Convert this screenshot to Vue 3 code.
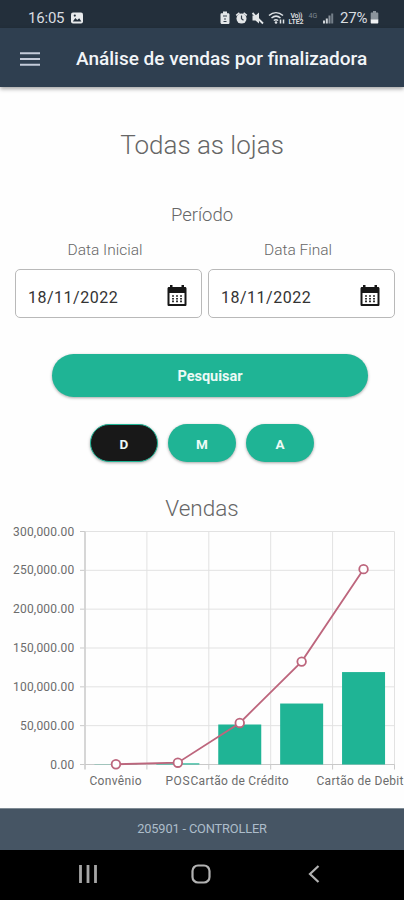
<template>
  <div class="screen">
    <div class="status-bar">
      <div class="status-left">
        <span class="clock">16:05</span>
        <svg class="picture-icon" width="12" height="12" viewBox="0 0 12 12">
          <rect x="0" y="0.5" width="12" height="11" rx="2" fill="#e8eaec" />
          <path d="M1.8 9.4 4.4 6l1.8 2 2-1.8 2.2 3.2z" fill="#232f3b" />
          <circle cx="3.8" cy="3.6" r="1.1" fill="#232f3b" />
        </svg>
      </div>
      <div class="status-right">
        <svg class="status-icons" width="114" height="16" viewBox="0 0 114 16">
          <g fill="#e3e6e8">
            <path d="M3 1.5h4v1.7h1.2c.9 0 1.3.6 1.3 1.3v8c0 1-.6 1.5-1.5 1.5H2c-.9 0-1.5-.6-1.5-1.5v-8c0-.8.5-1.3 1.3-1.3H3z" />
            <circle cx="21.5" cy="8.6" r="5" />
            <path d="m15.7 4.8 3.2-2.6 1 1.2-3.2 2.6zM27.3 4.8l-3.2-2.6-1 1.2 3.2 2.6z" />
            <path d="M32.500 5.500H35.500L39 2.500v11L35.500 10.500H32.500z" />
          </g>
          <path d="M3 6h4M3.5 11.5h3M5 8v2" stroke="#34404b" fill="none" />
          <path d="M21.5 5.5v3.3l2 1.5" stroke="#34404b" stroke-width="1.2" fill="none" />
          <path d="m32.5 3 10.5 10.5" stroke="#e3e6e8" stroke-width="1.9" />
          <g fill="none" stroke="#dfe3e6" stroke-width="1.5">
            <path d="M49 5.5c4.2-3.7 9.7-3.7 14 0M51.5 8c2.8-2.3 6.3-2.3 9 0M53.8 10.5c1.3-1 3-1 4.4 0" />
            <path d="M60.5 9.5v4M63.5 9.5v4" />
          </g>
          <circle cx="56" cy="12.5" r="1.3" fill="#dfe3e6" />
          <text x="70.5" y="7.5" class="volte" textLength="12">Vo))</text>
          <text x="68.5" y="14" class="volte" textLength="15">LTE2</text>
          <text x="88.5" y="7.5" class="network">4G</text>
          <g>
            <rect x="103" y="10.5" width="2" height="3" fill="#cfd4d8" />
            <rect x="105.8" y="8.5" width="2" height="5" fill="#cfd4d8" />
            <rect x="108.5" y="5.5" width="2" height="8" fill="#8b949d" />
            <rect x="111.2" y="3.5" width="2" height="10" fill="#737e88" />
          </g>
        </svg>
        <span class="battery-text">27%</span>
        <svg width="9" height="13" viewBox="0 0 9 13">
          <path d="M3 0h3v1.5h1.3c.7 0 1 .4 1 1V9H.7V2.5c0-.6.3-1 1-1H3z" fill="#8b949c" />
          <path d="M.7 8.5h7.6v3c0 .7-.4 1-1 1H1.7c-.6 0-1-.3-1-1z" fill="#f0f1f2" />
        </svg>
      </div>
    </div>

    <header class="toolbar">
      <svg class="menu-icon" width="20" height="14" viewBox="0 0 20 14">
        <path d="M0 1.2h20M0 7h20M0 12.8h20" stroke="#c4cbd9" stroke-width="2.1" />
      </svg>
      <h1 class="toolbar-title">Análise de vendas por finalizadora</h1>
    </header>

    <main class="content">
      <h2 class="store-title">Todas as lojas</h2>
      <h3 class="period-title">Período</h3>

      <div class="dates">
        <div v-for="field in dateFields" :key="field.label" class="date-field">
          <label class="date-label">{{ field.label }}</label>
          <div class="date-input">
            <span class="date-value">{{ field.value }}</span>
            <svg width="20" height="22" viewBox="0 0 20 22">
              <path d="M3 0h2.5v2h9V0H17v2h1c1 0 1.500.6 1.500 1.500v16c0 1-.5 1.500-1.500 1.500H2c-1 0-1.500-.5-1.500-1.500v-16C.5 2.600 1 2 2 2h1z" fill="#171717" />
              <path d="M2.5 8h15v11h-15z" fill="#fff" />
              <path d="M5 11h10.500M5 13.700h10.500M5 16.400h10.500" stroke="#333" stroke-width="1.6" stroke-dasharray="2 2" />
            </svg>
          </div>
        </div>
      </div>

      <button class="search-button">Pesquisar</button>

      <div class="ranges">
        <button
          v-for="range in ranges"
          :key="range"
          class="range-button"
          :class="{ active: range === activeRange }"
          @click="activeRange = range"
        >{{ range }}</button>
      </div>

      <h3 class="chart-title">Vendas</h3>
      <svg class="chart" width="404" height="272" viewBox="0 0 404 272">
        <g v-for="tick in yTicks" :key="tick.value">
          <line :x1="left" :x2="right" :y1="tick.y" :y2="tick.y" class="grid-line" />
          <line :x1="left - 5" :x2="left" :y1="tick.y" :y2="tick.y" class="axis-line" />
          <text x="74.5" :y="tick.y + 4" class="y-label">{{ tick.text }}</text>
        </g>
        <g v-for="n in 5" :key="n">
          <line :x1="left + n * step" :x2="left + n * step" :y1="top" :y2="bottom" class="grid-line" />
          <line :x1="left + n * step" :x2="left + n * step" :y1="bottom" :y2="bottom + 5" class="axis-line" />
        </g>
        <line :x1="left" :x2="left" :y1="top" :y2="bottom + 5" class="y-axis" />
        <line :x1="left" :x2="right" :y1="bottom" :y2="bottom" class="axis-line" />
        <rect
          v-for="(bar, i) in bars"
          :key="i"
          :x="center(i) - 21.5"
          :y="yPos(bar)"
          width="43"
          :height="bottom - yPos(bar)"
          fill="#1fb495"
        />
        <polyline :points="linePoints" class="total-line" />
        <circle v-for="(total, i) in totals" :key="i" :cx="center(i)" :cy="yPos(total)" r="4.3" class="total-point" />
        <text v-for="label in xLabels" :key="label.text" :x="label.x" y="262.5" :textLength="label.width" class="x-label">{{ label.text }}</text>
      </svg>
    </main>

    <footer class="footer">205901 - CONTROLLER</footer>

    <nav class="nav-bar">
      <svg width="18" height="18" viewBox="0 0 18 18">
        <path d="M1.5 0v18M9 0v18M16.5 0v18" stroke="#a6a6a6" stroke-width="2.8" />
      </svg>
      <svg class="home-icon" width="20" height="20" viewBox="0 0 20 20">
        <rect x="1.5" y="1.5" width="17" height="17" rx="5.5" fill="none" stroke="#b2b2b2" stroke-width="2.2" />
      </svg>
      <svg width="12" height="18" viewBox="0 0 12 18">
        <path d="M10.5 1 2 9l8.5 8" fill="none" stroke="#b2b2b2" stroke-width="2.2" />
      </svg>
    </nav>
  </div>
</template>

<script setup>
import { ref, computed } from 'vue'

const dateFields = [
  { label: 'Data Inicial', value: '18/11/2022' },
  { label: 'Data Final', value: '18/11/2022' }
]

const ranges = ['D', 'M', 'A']
const activeRange = ref('D')

const bars = [300, 1500, 51500, 78500, 119000]
const totals = [300, 2300, 53500, 132500, 251500]
const xLabels = [
  { text: 'Convênio', x: 89.5, width: 52 },
  { text: 'POS', x: 165.5, width: 24 },
  { text: 'Cartão de Crédito', x: 190.5, width: 98 },
  { text: 'Cartão de Debit', x: 316.5, width: 87 }
]

const left = 85
const right = 394.5
const top = 9.5
const bottom = 242.5
const step = (right - left) / 5

const center = (i) => left + (i + 0.5) * step
const yPos = (value) => bottom - (value / 300000) * (bottom - top)

const yTicks = [300000, 250000, 200000, 150000, 100000, 50000, 0].map((value) => ({
  value,
  y: yPos(value),
  text: value.toLocaleString('en-US', { minimumFractionDigits: 2 })
}))

const linePoints = computed(() => totals.map((t, i) => `${center(i)},${yPos(t)}`).join(' '))
</script>

<style>
body {
  margin: 0;
}
</style>

<style scoped>
.screen {
  width: 404px;
  height: 900px;
  display: flex;
  flex-direction: column;
  overflow: hidden;
  background: #fefefe;
  font-family: Roboto, 'Liberation Sans', sans-serif;
}

.status-bar {
  flex: none;
  height: 28px;
  padding: 7px 25px 0 28px;
  box-sizing: border-box;
  display: flex;
  justify-content: space-between;
  align-items: flex-start;
  background: #232f3b;
  color: #d9dde0;
}

.status-left,
.status-right {
  display: flex;
  align-items: center;
  height: 21px;
}

.clock {
  width: 37px;
  font-size: 15px;
  letter-spacing: -0.2px;
}

.picture-icon {
  margin-left: 6px;
}

.battery-text {
  width: 30px;
  margin-left: 6px;
  font-size: 15px;
  letter-spacing: -0.2px;
}

.volte {
  font-size: 7px;
  font-weight: 700;
  fill: #d5d9dc;
}

.network {
  font-size: 7px;
  fill: #7d8892;
}

.toolbar {
  flex: none;
  height: 59px;
  padding: 2px 0 0 20px;
  box-sizing: border-box;
  display: flex;
  align-items: center;
  background: #2f3f50;
  box-shadow: 0 2px 4px rgba(0, 0, 0, 0.35);
}

.toolbar-title {
  margin: 0 0 0 36px;
  font-size: 19px;
  font-weight: 500;
  white-space: nowrap;
  color: #f2f5f8;
}

.content {
  flex: 1;
  min-height: 0;
  display: flex;
  flex-direction: column;
  align-items: center;
}

.store-title,
.period-title,
.chart-title {
  margin: 0;
  font-weight: 300;
  color: #666;
}

.store-title {
  margin-top: 42px;
  line-height: 32px;
  font-size: 26px;
}

.period-title {
  margin-top: 42px;
  line-height: 24px;
  font-size: 18.5px;
}

.dates {
  width: 380px;
  margin: 12px 0 0 6px;
  display: flex;
  gap: 6px;
}

.date-field {
  flex: 1;
  display: flex;
  flex-direction: column;
  gap: 8px;
}

.date-label {
  padding-right: 7px;
  line-height: 22px;
  font-size: 15.5px;
  font-weight: 300;
  text-align: center;
  color: #666;
}

.date-input {
  height: 49px;
  padding: 5px 14px 0 12px;
  box-sizing: border-box;
  display: flex;
  justify-content: space-between;
  align-items: center;
  border: 1.5px solid #b9b9b9;
  border-radius: 5px;
  background: #fff;
}

.date-value {
  padding-top: 2px;
  font-size: 16px;
  letter-spacing: 0.5px;
  color: #333;
}

button {
  border: none;
  padding: 0;
  font-family: inherit;
  color: #ecfaf6;
  background: #1fb495;
  box-shadow: 0 1px 3px rgba(0, 0, 0, 0.35);
}

.search-button {
  width: 316px;
  height: 43px;
  margin: 36px 0 0 16px;
  padding-top: 2px;
  border-radius: 22px;
  font-size: 14.5px;
  font-weight: 700;
}

.ranges {
  margin-top: 27px;
  display: flex;
  gap: 10px;
}

.range-button {
  width: 68px;
  height: 38px;
  padding-top: 1px;
  border-radius: 19px;
  font-size: 13.5px;
  font-weight: 700;
}

.range-button.active {
  border: 1.5px solid #1fb495;
  background: #181818;
}

.chart-title {
  margin-top: 32px;
  line-height: 28px;
  font-size: 22.5px;
}

.chart {
  flex: none;
}

.grid-line {
  stroke: #e2e2e2;
  stroke-width: 1;
}

.axis-line {
  stroke: #c9c9c9;
  stroke-width: 1;
}

.y-axis {
  stroke: #d2d2d2;
  stroke-width: 1.8;
}

.y-label {
  font-size: 12px;
  letter-spacing: 0.2px;
  text-anchor: end;
  fill: #6c6c6c;
}

.x-label {
  font-size: 12px;
  fill: #6c6c6c;
}

.total-line {
  fill: none;
  stroke: #bd667d;
  stroke-width: 1.8;
}

.total-point {
  fill: #fff;
  stroke: #bd667d;
  stroke-width: 1.8;
}

.footer {
  flex: none;
  height: 42px;
  box-sizing: border-box;
  border-top: 1px solid #7f8b94;
  line-height: 40px;
  text-align: center;
  font-size: 12.8px;
  letter-spacing: -0.15px;
  color: #adbdca;
  background: #465564;
}

.nav-bar {
  flex: none;
  height: 50px;
  padding: 0 84px 2px 79px;
  box-sizing: border-box;
  display: flex;
  justify-content: space-between;
  align-items: center;
  background: #000;
}

.home-icon {
  margin-right: 3px;
}
</style>
